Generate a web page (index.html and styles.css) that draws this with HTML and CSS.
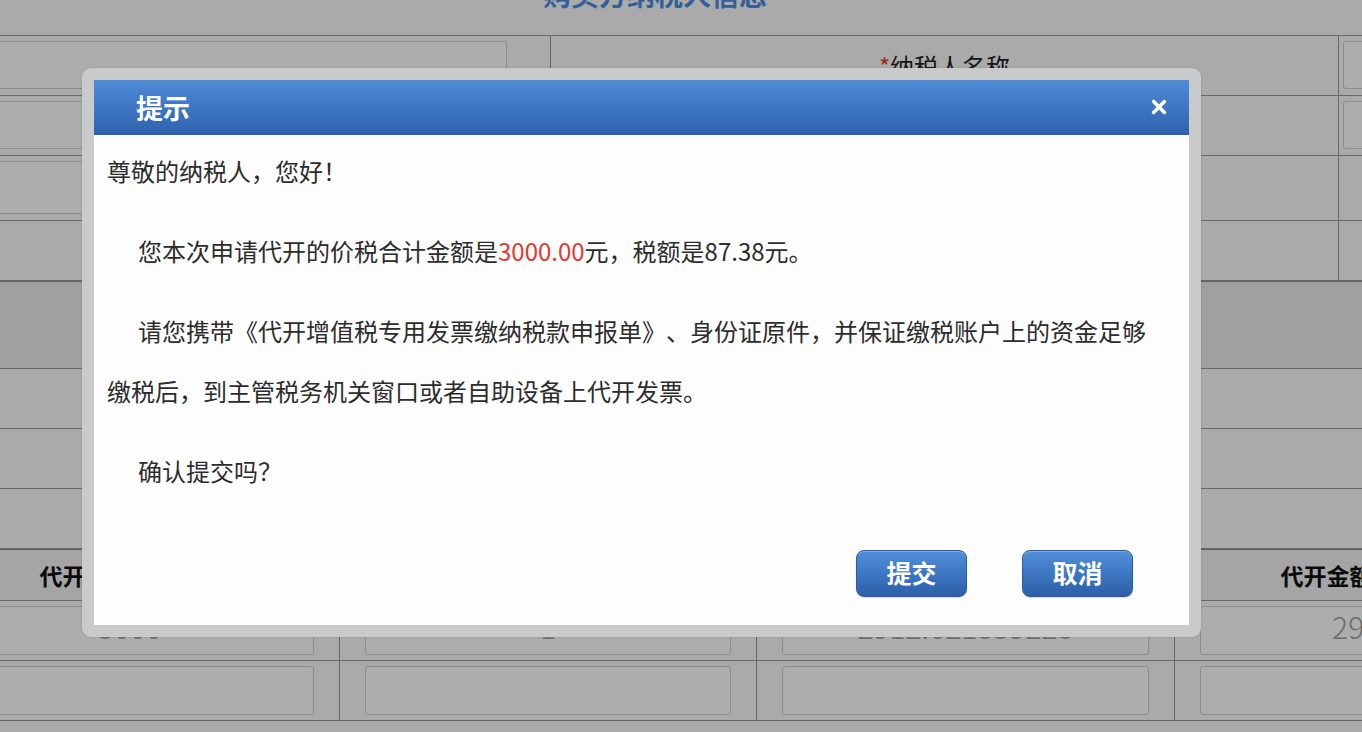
FILE: index.html
```html
<!DOCTYPE html>
<html lang="zh-CN">
<head>
<meta charset="utf-8">
<title>提示</title>
<link rel="stylesheet" href="styles.css">
</head>
<body>
<div class="page">
  <div class="page-title"><span>购买方纳税人信息</span></div>

  <div class="info-grid">
    <div class="cell cell-a"><div class="box"></div></div>
    <div class="cell cell-b"><span class="req">*</span>纳税人名称</div>
    <div class="cell cell-c"><div class="box"></div></div>

    <div class="cell cell-a"><div class="box"></div></div>
    <div class="cell cell-b"><span class="req">*</span>纳税人识别号</div>
    <div class="cell cell-c"><div class="box"></div></div>

    <div class="cell cell-a"><div class="box"></div></div>
    <div class="cell cell-b">地址、电话</div>
    <div class="cell cell-c"></div>

    <div class="cell cell-a"></div>
    <div class="cell cell-b">开户行及账号</div>
    <div class="cell cell-c"></div>
  </div>

  <div class="band">销售方信息</div>
  <div class="plain-row"></div>
  <div class="plain-row"></div>
  <div class="plain-row"></div>

  <div class="goods">
    <div class="gh gh-first">代开发票含税销售额</div>
    <div class="gh">数量</div>
    <div class="gh">单价</div>
    <div class="gh">代开金额（不含税）</div>

    <div class="gc gc-first"><div class="box val">3000</div></div>
    <div class="gc"><div class="box val">1</div></div>
    <div class="gc"><div class="box val">2912.621359223</div></div>
    <div class="gc gc-last"><div class="box val">2912.62</div></div>

    <div class="gc gc-first"><div class="box"></div></div>
    <div class="gc"><div class="box"></div></div>
    <div class="gc"><div class="box"></div></div>
    <div class="gc gc-last"><div class="box"></div></div>
  </div>
</div>

<div class="overlay"></div>

<div class="dialog">
  <div class="dialog-inner">
    <div class="dialog-head">
      <span class="dialog-title">提示</span>
      <svg class="dialog-close" width="16" height="16" viewBox="0 0 16 16" aria-label="关闭">
        <path d="M2.6 2.6 L13.4 13.4 M13.4 2.6 L2.6 13.4" stroke="#ffffff" stroke-width="3.6" stroke-linecap="round" fill="none"/>
      </svg>
    </div>
    <div class="dialog-body">
      <p>尊敬的纳税人，您好！</p>
      <p class="ind">您本次申请代开的价税合计金额是<span class="red">3000.00</span>元，税额是87.38元。</p>
      <p class="ind">请您携带《代开增值税专用发票缴纳税款申报单》、身份证原件，并保证缴税账户上的资金足够缴税后，到主管税务机关窗口或者自助设备上代开发票。</p>
      <p class="ind last">确认提交吗？</p>
    </div>
    <div class="dialog-foot">
      <button class="btn" type="button">提交</button>
      <button class="btn" type="button">取消</button>
    </div>
  </div>
</div>
</body>
</html>
```

FILE: styles.css
```css
* {
  box-sizing: border-box;
}

html,
body {
  margin: 0;
  padding: 0;
}

body {
  width: 1362px;
  height: 732px;
  overflow: hidden;
  background: #fbfbfb;
  font-family: "Noto Sans CJK SC", "Noto Sans", sans-serif;
  color: #222;
  text-spacing-trim: space-all;
}

.page {
  width: 1362px;
}

/* ---------- page behind the dialog ---------- */
.page-title {
  height: 35px;
  overflow: hidden;
  text-align: center;
  padding-right: 52px;
}

.page-title span {
  display: block;
  font-size: 28px;
  font-weight: 700;
  line-height: 28px;
  margin-top: -20px;
  color: #4a8ce0;
}

.info-grid {
  display: grid;
  grid-template-columns: 551px 788px 1fr;
  grid-template-rows: 60px 60px 65px 60px;
  border-top: 1px solid #9a9a9a;
}

.cell {
  border-bottom: 1px solid #9a9a9a;
  padding: 5px 0 6px;
}

.cell-a {
  border-right: 1px solid #9a9a9a;
  padding-right: 43px;
}

.cell-b {
  border-right: 1px solid #9a9a9a;
  padding: 0;
  display: flex;
  align-items: center;
  justify-content: center;
  font-size: 24px;
  color: #222;
}

.cell-c {
  padding-left: 4px;
}

.box {
  height: 100%;
  border: 1px solid #cfcfcf;
  border-radius: 3px;
  background: #ffffff;
}

.cell-a .box {
  border-left: none;
  border-radius: 0 3px 3px 0;
}

.cell-c .box {
  border-right: none;
  border-radius: 3px 0 0 3px;
}

.req {
  color: #e43a30;
}

.band {
  height: 88px;
  background: #ececec;
  border-top: 1px solid #8c8c8c;
  border-bottom: 1px solid #9a9a9a;
  display: flex;
  align-items: center;
  justify-content: center;
  font-size: 24px;
  font-weight: 700;
}

.plain-row {
  height: 60px;
  border-bottom: 1px solid #9a9a9a;
}

.goods {
  display: grid;
  grid-template-columns: 340px 417px 418px 418px;
  grid-template-rows: 51px 60px 60px;
  border-top: 1px solid #8c8c8c;
}

.gh {
  background: #f3f3f3;
  border-bottom: 1px solid #9a9a9a;
  display: flex;
  align-items: center;
  justify-content: center;
  font-size: 23px;
  font-weight: 700;
  color: #111;
}

.gh-first {
  padding-right: 54px;
}

.gc {
  border-right: 1px solid #9a9a9a;
  border-bottom: 1px solid #9a9a9a;
  padding: 5px 25px 5px;
}

.gc-first {
  padding-left: 0;
}

.gc-first .box {
  border-left: none;
  border-radius: 0 3px 3px 0;
  padding-right: 54px;
}

.gc-last {
  border-right: none;
}

.val {
  display: flex;
  align-items: center;
  justify-content: center;
  padding-bottom: 9px;
  font-size: 30px;
  font-weight: 300;
  color: #a0a0a0;
}

/* ---------- overlay ---------- */
.overlay {
  position: fixed;
  inset: 0;
  background: rgba(0, 0, 0, 0.32);
}

/* ---------- dialog ---------- */
.dialog {
  position: fixed;
  left: 82px;
  top: 68px;
  width: 1119px;
  height: 569px;
  padding: 12px;
  background: #c9cacc;
  border-radius: 9px;
  box-shadow: 0 0 3px rgba(0, 0, 0, 0.15);
}

.dialog-inner {
  height: 100%;
  background: #fdfdfe;
  display: flex;
  flex-direction: column;
}

.dialog-head {
  height: 55px;
  flex: none;
  display: flex;
  align-items: center;
  justify-content: space-between;
  padding: 0 22px 0 42px;
  background: linear-gradient(#4f8cd7 0%, #3f78c5 45%, #2f63ad 100%);
  border-bottom: 1px solid #2c5ca3;
}

.dialog-title {
  font-size: 27px;
  font-weight: 700;
  color: #ffffff;
  line-height: 1;
}

.dialog-close {
  display: block;
}

.dialog-body {
  padding: 6px 29px 0 13px;
  font-size: 24px;
  line-height: 60px;
  color: #2c2c2c;
}

.dialog-body p {
  margin: 0 0 20px;
}

.dialog-body p.last {
  margin-bottom: 0;
}

.dialog-body .ind {
  text-indent: 31px;
}

.red {
  color: #e4392f;
}

.dialog-foot {
  margin-top: 49px;
  display: flex;
  justify-content: flex-end;
  gap: 55px;
  padding-right: 56px;
}

.btn {
  width: 111px;
  height: 47px;
  border: 1px solid #2b5a9e;
  border-radius: 8px;
  background: linear-gradient(#5390d9 0%, #3d76c3 50%, #2c5fa8 100%);
  box-shadow: inset 0 1px 0 rgba(255, 255, 255, 0.25), 0 1px 1px rgba(0, 0, 0, 0.15);
  color: #ffffff;
  font-family: "Noto Sans CJK SC", "Noto Sans", sans-serif;
  font-size: 25px;
  font-weight: 700;
  line-height: 1;
  padding: 0 0 3px;
  cursor: pointer;
}
```
